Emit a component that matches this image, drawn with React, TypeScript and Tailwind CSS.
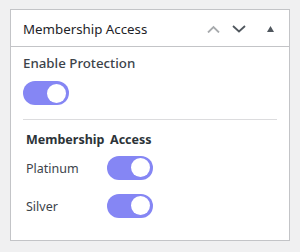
const rows = [
  { label: "Platinum", on: true },
  { label: "Silver", on: true },
];

function Toggle({ on }: { on: boolean }) {
  return (
    <span
      className={`flex h-[24px] w-[46px] items-center rounded-full px-[3px] ${
        on ? "justify-end bg-[#8586f4]" : "justify-start bg-gray-300"
      }`}
    >
      <span className="h-[19px] w-[19px] rounded-full bg-white" />
    </span>
  );
}

export default function App() {
  return (
    <div className="h-[252px] w-[300px] bg-[#f0f0f1] px-[10px] pt-[9px] font-['Noto_Sans','Open_Sans',sans-serif] text-[#1d2327]">
      <div className="h-[232px] border border-[#c3c4c7] bg-white">
        <div className="flex h-[37px] items-center border-b border-[#c3c4c7] pl-[12px] pr-[15px]">
          <h2 className="flex-1 pt-[3px] text-[13.3px] leading-none">Membership Access</h2>
          <div className="flex items-center pt-[1px]">
            <svg width="13" height="8" viewBox="0 0 13 8" className="mr-[12px]">
              <path d="M1 7.5 L6.5 2 L12 7.5" fill="none" stroke="#a7aaad" strokeWidth="1.8" />
            </svg>
            <svg width="14" height="8" viewBox="0 0 14 8" className="mr-[21px]">
              <path d="M1 1 L7 6.5 L13 1" fill="none" stroke="#50575e" strokeWidth="1.8" />
            </svg>
            <svg width="7" height="6" viewBox="0 0 7 6">
              <path d="M0 6 L3.5 0 L7 6 Z" fill="#50575e" />
            </svg>
          </div>
        </div>
        <div className="px-[12px] pt-[6px]">
          <p className="text-[13.3px] leading-[20px] font-medium text-[#3c434a]">Enable Protection</p>
          <div className="mt-[8px]">
            <Toggle on />
          </div>
          <hr className="mt-[14px] border-[#dcdcde]" />
          <table className="ml-[3px] mt-[11px] text-[12.5px] text-[#3c434a]">
            <thead>
              <tr>
                <th className="w-[84px] p-0 text-left font-bold text-[#2c3338]">Membership</th>
                <th className="p-0 text-left font-bold text-[#2c3338]">Access</th>
              </tr>
            </thead>
            <tbody>
              {rows.map((row) => (
                <tr key={row.label}>
                  <td className="pt-[10px] pb-[7px] align-top">{row.label}</td>
                  <td className="pt-[6px] pb-[8px] align-top">
                    <span className="-ml-[3px] block">
                      <Toggle on={row.on} />
                    </span>
                  </td>
                </tr>
              ))}
            </tbody>
          </table>
        </div>
      </div>
    </div>
  );
}
